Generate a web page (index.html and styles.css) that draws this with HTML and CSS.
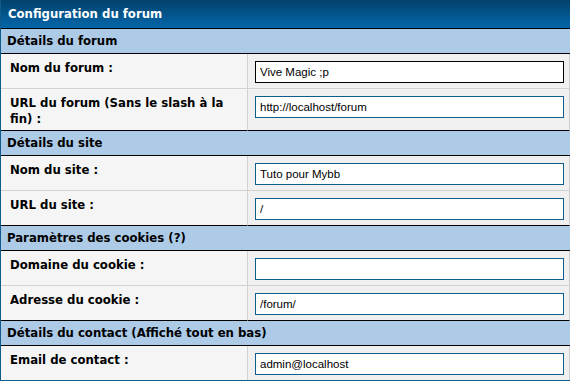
FILE: index.html
```html
<!DOCTYPE html>
<html lang="fr">
<head>
  <meta charset="UTF-8" />
  <title>Configuration du forum</title>
  <link rel="stylesheet" href="styles.css">
</head>
<body>

  <table class="config">
    <tr>
      <th colspan="2" class="title">Configuration du forum</th>
    </tr>

    <tr>
      <th colspan="2" class="section">Détails du forum</th>
    </tr>
    <tr>
      <td class="label">Nom du forum :</td>
      <td class="field"><input type="text" class="focus" value="Vive Magic ;p"></td>
    </tr>
    <tr class="last">
      <td class="label">URL du forum (Sans le slash à la fin) :</td>
      <td class="field"><input type="text" value="http://localhost/forum"></td>
    </tr>

    <tr>
      <th colspan="2" class="section">Détails du site</th>
    </tr>
    <tr>
      <td class="label">Nom du site :</td>
      <td class="field"><input type="text" value="Tuto pour Mybb"></td>
    </tr>
    <tr class="last">
      <td class="label">URL du site :</td>
      <td class="field"><input type="text" value="/"></td>
    </tr>

    <tr>
      <th colspan="2" class="section">Paramètres des cookies (?)</th>
    </tr>
    <tr>
      <td class="label">Domaine du cookie :</td>
      <td class="field"><input type="text" value=""></td>
    </tr>
    <tr class="last">
      <td class="label">Adresse du cookie :</td>
      <td class="field"><input type="text" value="/forum/"></td>
    </tr>

    <tr>
      <th colspan="2" class="section">Détails du contact (Affiché tout en bas)</th>
    </tr>
    <tr class="end">
      <td class="label">Email de contact :</td>
      <td class="field"><input type="text" value="admin@localhost"></td>
    </tr>
  </table>

</body>
</html>
```

FILE: styles.css
```css
* {
  box-sizing: border-box;
}
body {
  margin: 0;
  font-family: "DejaVu Sans Condensed", "DejaVu Sans", Verdana, sans-serif;
  font-size: 13px;
  color: #000;
  background: #fff;
}
.config {
  width: 570px;
  border-collapse: separate;
  border-spacing: 0;
  border-left: 1px solid #0f5b8c;
  border-bottom: 1px solid #0f5b8c;
}
.config th {
  text-align: left;
  font-weight: bold;
  line-height: 16px;
  border-bottom: 1px solid #000;
}
.config .title {
  height: 29px;
  padding: 0 7px;
  color: #fff;
  background: linear-gradient(#02416b, #0467aa);
}
.config .section {
  height: 25px;
  padding: 0 6px;
  background: #adcbe6;
}
.config td {
  vertical-align: top;
  border-bottom: 1px solid #d2d2d2;
}
.config .label {
  width: 247px;
  padding: 6px 8px 3px 9px;
  font-weight: bold;
  line-height: 16px;
  background: #f5f5f5;
  border-right: 1px solid #d2d2d2;
}
.config .field {
  padding: 7px 5px 5px 7px;
  background: #f0f0f0;
  border-right: 1px solid #cfcfcf;
}
.config tr.last td {
  border-bottom-color: #000;
}
.config tr.end td {
  border-bottom: none;
}
.field input {
  display: block;
  width: 309px;
  height: 22px;
  margin: 0;
  padding: 0 4px;
  border: 1px solid #0f5c8e;
  background: #fff;
  font-family: "Liberation Sans", Arial, sans-serif;
  font-size: 11.5px;
  color: #000;
  outline: none;
}
.field input.focus {
  border-color: #000;
}
```
